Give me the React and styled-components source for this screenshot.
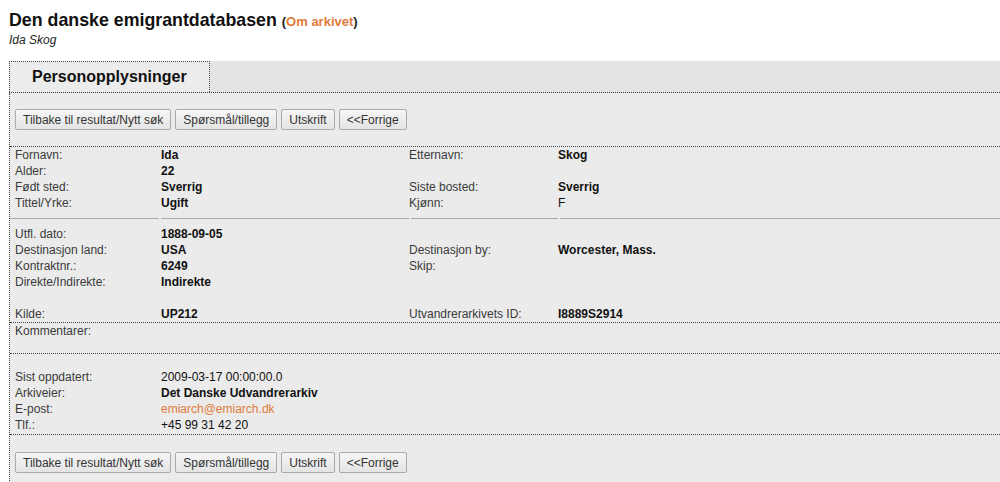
import React from "react";
import styled, { createGlobalStyle } from "styled-components";

const Global = createGlobalStyle`
  html, body { margin: 0; padding: 0; background: #fff; }
  body { font-family: "Liberation Sans", Arial, sans-serif; color: #222; }
`;

const Page = styled.div`
  padding: 10px 0 0 9px;
  height: 482px;
  box-sizing: border-box;
  overflow: hidden;
  display: flex;
  flex-direction: column;
`;

const Title = styled.h1`
  margin: 0;
  font-size: 17.8px;
  line-height: 20px;
  font-weight: bold;
  color: #111;
`;

const TitleLink = styled.span`
  font-size: 13px;
  color: #222;
  a { color: #e07b3c; text-decoration: none; }
`;

const Subtitle = styled.div`
  font-size: 12px;
  font-style: italic;
  line-height: 14px;
  margin-top: 1px;
  color: #222;
`;

const TabBar = styled.div`
  margin-top: 14px;
  display: flex;
  height: 31px;
  background: #e2e3e4;
  border-bottom: 1px dotted #444;
`;

const Tab = styled.div`
  width: 177px;
  padding-left: 22px;
  border: 1px dotted #444;
  border-bottom: none;
  background: #ececec;
  font-size: 16px;
  font-weight: bold;
  line-height: 30px;
  color: #111;
`;

const Panel = styled.div`
  flex: 1;
  background: #ebebeb;
  border-left: 1px dotted #444;
  font-size: 12px;
`;

const ButtonRow = styled.div`
  display: flex;
  gap: 4px;
  padding: ${(p) => p.$pad};
  padding-left: 5px;
`;

const Button = styled.button`
  font-family: "Liberation Sans", Arial, sans-serif;
  font-size: 12px;
  color: #333;
  height: 21px;
  padding: 0 7px;
  background: linear-gradient(#f6f6f6, #e4e4e4);
  border: 1px solid #aaa;
  border-radius: 2px;
`;

const Dotted = styled.div`
  border-top: 1px dotted #444;
`;

const Grid = styled.div`
  display: grid;
  grid-template-columns: 151px 248px 149px 1fr;
  grid-auto-rows: 16px;
  line-height: 16px;
  padding: ${(p) => p.$pad || "0"};
`;

const Label = styled.div`
  color: #3a3a3a;
  padding-left: ${(p) => (p.$first ? "5px" : "0")};
  white-space: nowrap;
`;

const Value = styled.div`
  color: ${(p) => (p.$link ? "#e07b3c" : "#111")};
  font-weight: ${(p) => (p.$bold ? "bold" : "normal")};
  white-space: nowrap;
`;

const Divider = styled.div`
  display: grid;
  grid-template-columns: 149px 248px 147px 1fr;
  column-gap: 2px;
  height: 1px;
`;

const DividerCell = styled.div`
  background: #a9a9a9;
`;

const Comment = styled.div`
  height: 30px;
  line-height: 16px;
  padding-left: 5px;
  color: #3a3a3a;
`;

function Row({ l1, v1, b1 = true, l2, v2, b2 = true, link1 }) {
  return (
    <>
      <Label $first>{l1}</Label>
      <Value $bold={b1 && !link1} $link={link1}>{v1}</Value>
      <Label>{l2}</Label>
      <Value $bold={b2}>{v2}</Value>
    </>
  );
}

function Buttons({ pad }) {
  return (
    <ButtonRow $pad={pad}>
      <Button>Tilbake til resultat/Nytt søk</Button>
      <Button>Spørsmål/tillegg</Button>
      <Button>Utskrift</Button>
      <Button>&lt;&lt;Forrige</Button>
    </ButtonRow>
  );
}

export default function App() {
  return (
    <>
      <Global />
      <Page>
        <Title>
          Den danske emigrantdatabasen{" "}
          <TitleLink>
            (<a href="#">Om arkivet</a>)
          </TitleLink>
        </Title>
        <Subtitle>Ida Skog</Subtitle>
        <TabBar>
          <Tab>Personopplysninger</Tab>
        </TabBar>
        <Panel>
          <Buttons pad="16px 0 16px" />
          <Dotted />
          <Grid $pad="0 0 7px">
            <Row l1="Fornavn:" v1="Ida" l2="Etternavn:" v2="Skog" />
            <Row l1="Alder:" v1="22" l2="" v2="" />
            <Row l1="Født sted:" v1="Sverrig" l2="Siste bosted:" v2="Sverrig" />
            <Row l1="Tittel/Yrke:" v1="Ugift" l2="Kjønn:" v2="F" b2={false} />
          </Grid>
          <Divider>
            <DividerCell />
            <DividerCell />
            <DividerCell />
            <DividerCell />
          </Divider>
          <Grid $pad="7px 0 0">
            <Row l1="Utfl. dato:" v1="1888-09-05" l2="" v2="" />
            <Row l1="Destinasjon land:" v1="USA" l2="Destinasjon by:" v2="Worcester, Mass." />
            <Row l1="Kontraktnr.:" v1="6249" l2="Skip:" v2="" />
            <Row l1="Direkte/Indirekte:" v1="Indirekte" l2="" v2="" />
            <Row l1="" v1="" l2="" v2="" />
            <Row l1="Kilde:" v1="UP212" l2="Utvandrerarkivets ID:" v2="I8889S2914" />
          </Grid>
          <Dotted />
          <Comment>Kommentarer:</Comment>
          <Dotted />
          <Grid $pad="15px 0 1px">
            <Row l1="Sist oppdatert:" v1="2009-03-17 00:00:00.0" b1={false} l2="" v2="" />
            <Row l1="Arkiveier:" v1="Det Danske Udvandrerarkiv" l2="" v2="" />
            <Row l1="E-post:" v1="emiarch@emiarch.dk" link1 l2="" v2="" />
            <Row l1="Tlf.:" v1="+45 99 31 42 20" b1={false} l2="" v2="" />
          </Grid>
          <Dotted />
          <Buttons pad="17px 0 10px" />
        </Panel>
      </Page>
    </>
  );
}
